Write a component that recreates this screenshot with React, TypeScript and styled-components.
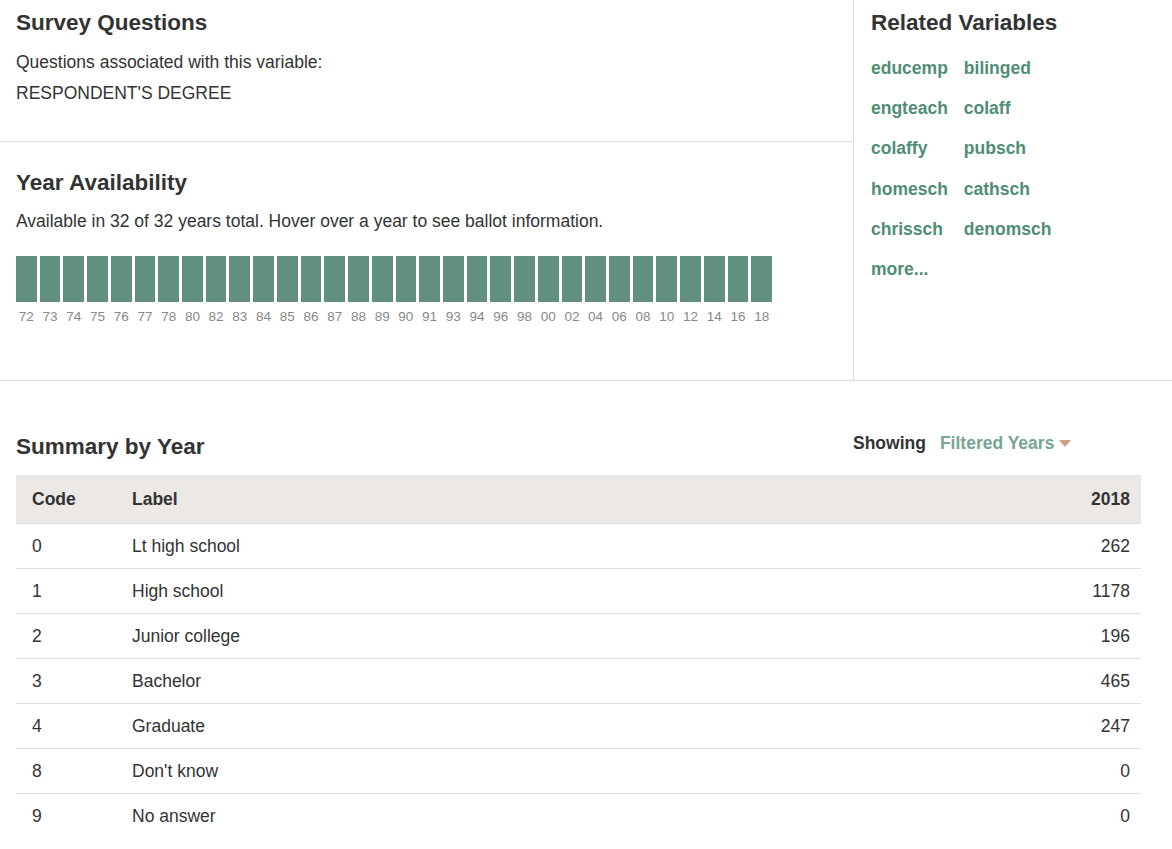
import React from "react";
import styled, { createGlobalStyle } from "styled-components";

const GlobalStyle = createGlobalStyle`
  html, body { margin: 0; padding: 0; background: #fff; }
  body {
    font-family: "Liberation Sans", Arial, Helvetica, sans-serif;
    color: #333;
    font-size: 17.5px;
  }
  * { box-sizing: border-box; }
`;

const Page = styled.div`
  width: 1172px;
`;

const Top = styled.div`
  display: flex;
  height: 381px;
  border-bottom: 1px solid #ddd;
`;

const LeftCol = styled.div`
  width: 854px;
  border-right: 1px solid #ddd;
  display: flex;
  flex-direction: column;
`;

const RightCol = styled.div`
  flex: 1;
  padding: 11px 16px 0 17px;
`;

const SurveySection = styled.section`
  height: 142px;
  border-bottom: 1px solid #ddd;
  padding: 11px 16px 0;
`;

const YearSection = styled.section`
  flex: 1;
  padding: 29px 16px 0;
`;

const Heading = styled.h2`
  margin: 0;
  font-size: 22.5px;
  line-height: 24px;
  font-weight: bold;
  color: #333;
`;

const Text = styled.p<{ $top: number }>`
  margin: ${(p) => p.$top}px 0 0;
  font-size: 17.5px;
  line-height: 24px;
  color: #333;
`;

const Bars = styled.div`
  margin-top: 23px;
  width: 756px;
  display: flex;
  gap: 3px;
`;

const YearCell = styled.div`
  flex: 1;
  display: flex;
  flex-direction: column;
  align-items: center;
`;

const Bar = styled.div`
  width: 100%;
  height: 46px;
  background: #619080;
`;

const YearLabel = styled.span`
  margin-top: 7px;
  font-size: 13.5px;
  line-height: 16px;
  color: #888;
`;

const LinkGrid = styled.div`
  margin-top: 21px;
  display: grid;
  grid-template-columns: auto auto;
  justify-content: start;
  column-gap: 16px;
  row-gap: 16.2px;
`;

const VarLink = styled.a`
  font-size: 17.5px;
  line-height: 24px;
  font-weight: bold;
  color: #4f8d74;
  text-decoration: none;
`;

const Bottom = styled.section`
  padding: 54px 31px 0 16px;
`;

const SummaryHead = styled.div`
  display: grid;
  grid-template-columns: 837px 1fr;
  align-items: center;
`;

const Showing = styled.div`
  display: flex;
  align-items: center;
  font-size: 17.5px;
  font-weight: bold;
  margin-top: -8px;
`;

const ShowLabel = styled.span`
  color: #333;
`;

const Filter = styled.span`
  margin-left: 14px;
  color: #78a593;
  display: inline-flex;
  align-items: center;
`;

const Caret = styled.span`
  display: inline-block;
  margin-left: 5px;
  width: 0;
  height: 0;
  border-left: 6px solid transparent;
  border-right: 6px solid transparent;
  border-top: 7px solid #c9a283;
`;

const Table = styled.table`
  margin-top: 16px;
  width: 1125px;
  border-collapse: collapse;
  font-size: 17.5px;
`;

const Th = styled.th<{ $right?: boolean; $w?: number }>`
  background: #ebe8e5;
  height: 48px;
  padding: 2px ${(p) => (p.$right ? 11 : 16)}px 0 16px;
  text-align: ${(p) => (p.$right ? "right" : "left")};
  font-weight: bold;
  color: #333;
  border-bottom: 1px solid #ddd;
  width: ${(p) => (p.$w ? `${p.$w}px` : "auto")};
`;

const Tr = styled.tr`
  & + & td { border-top: 1px solid #ddd; }
`;

const Td = styled.td<{ $right?: boolean }>`
  height: 45px;
  padding: 2px ${(p) => (p.$right ? 11 : 16)}px 0 16px;
  text-align: ${(p) => (p.$right ? "right" : "left")};
  color: #333;
`;

const years = [
  "72", "73", "74", "75", "76", "77", "78", "80", "82", "83", "84", "85", "86", "87", "88", "89",
  "90", "91", "93", "94", "96", "98", "00", "02", "04", "06", "08", "10", "12", "14", "16", "18",
];

const links = [
  "educemp", "bilinged", "engteach", "colaff", "colaffy", "pubsch",
  "homesch", "cathsch", "chrissch", "denomsch", "more...",
];

const rows = [
  ["0", "Lt high school", "262"],
  ["1", "High school", "1178"],
  ["2", "Junior college", "196"],
  ["3", "Bachelor", "465"],
  ["4", "Graduate", "247"],
  ["8", "Don't know", "0"],
  ["9", "No answer", "0"],
];

export default function App() {
  return (
    <Page>
      <GlobalStyle />
      <Top>
        <LeftCol>
          <SurveySection>
            <Heading>Survey Questions</Heading>
            <Text $top={15}>Questions associated with this variable:</Text>
            <Text $top={7}>RESPONDENT'S DEGREE</Text>
          </SurveySection>
          <YearSection>
            <Heading>Year Availability</Heading>
            <Text $top={14}>
              Available in 32 of 32 years total. Hover over a year to see ballot information.
            </Text>
            <Bars>
              {years.map((y) => (
                <YearCell key={y}>
                  <Bar />
                  <YearLabel>{y}</YearLabel>
                </YearCell>
              ))}
            </Bars>
          </YearSection>
        </LeftCol>
        <RightCol>
          <Heading>Related Variables</Heading>
          <LinkGrid>
            {links.map((l) => (
              <VarLink key={l} href="#">
                {l}
              </VarLink>
            ))}
          </LinkGrid>
        </RightCol>
      </Top>
      <Bottom>
        <SummaryHead>
          <Heading>Summary by Year</Heading>
          <Showing>
            <ShowLabel>Showing</ShowLabel>
            <Filter>
              Filtered Years
              <Caret />
            </Filter>
          </Showing>
        </SummaryHead>
        <Table>
          <thead>
            <tr>
              <Th $w={100}>Code</Th>
              <Th>Label</Th>
              <Th $right>2018</Th>
            </tr>
          </thead>
          <tbody>
            {rows.map((r) => (
              <Tr key={r[0]}>
                <Td>{r[0]}</Td>
                <Td>{r[1]}</Td>
                <Td $right>{r[2]}</Td>
              </Tr>
            ))}
          </tbody>
        </Table>
      </Bottom>
    </Page>
  );
}
